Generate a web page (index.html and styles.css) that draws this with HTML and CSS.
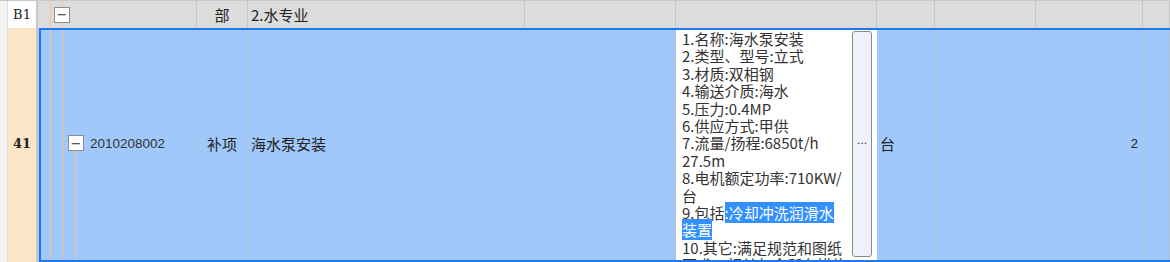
FILE: index.html
```
<!DOCTYPE html>
<html lang="zh-CN">
<head>
    <meta charset="UTF-8">
    <title>清单编辑</title>
    <link rel="stylesheet" href="styles.css">
</head>
<body>

<div class="sheet">
    <!-- 分部行 -->
    <div class="row row-part">
        <div class="gutter"></div>
        <div class="rowhead rowhead-part">B1</div>
        <div class="cell tree">
            <span class="tline t1"></span>
            <span class="tline t2"></span>
            <span class="hook"></span>
            <span class="fold fold-part">−</span>
        </div>
        <div class="cell center">部</div>
        <div class="cell">2.水专业</div>
        <div class="cell"></div>
        <div class="cell"></div>
        <div class="cell"></div>
        <div class="cell"></div>
        <div class="cell"></div>
        <div class="cell"></div>
    </div>

    <!-- 清单行（选中） -->
    <div class="row row-item">
        <div class="gutter"></div>
        <div class="rowhead rowhead-item">41</div>
        <div class="cell tree">
            <span class="tline t1"></span>
            <span class="tline t2"></span>
            <span class="tline t3"></span>
            <span class="fold fold-item">−</span>
            <span class="code">2010208002</span>
        </div>
        <div class="cell center">补项</div>
        <div class="cell wide">海水泵安装</div>
        <div class="cell editor">
            <div class="editor-text">
                1.名称:海水泵安装<br>
                2.类型、型号:立式<br>
                3.材质:双相钢<br>
                4.输送介质:海水<br>
                5.压力:0.4MP<br>
                6.供应方式:甲供<br>
                7.流量/扬程:6850t/h<br>
                27.5m<br>
                8.电机额定功率:710KW/<br>
                台<br>
                9.包括<span class="sel">:冷却冲洗润滑水</span><br>
                <span class="sel">装置</span><br>
                10.其它:满足规范和图纸<br>
                要求，相关包含所有措施
            </div>
            <div class="more-btn">...</div>
        </div>
        <div class="cell">台</div>
        <div class="cell"></div>
        <div class="cell right">2</div>
        <div class="cell"></div>
    </div>
</div>

</body>
</html>
```

FILE: styles.css
```
body {
    margin: 0;
    padding: 0;
    overflow: hidden;
    background-color: #f4f4f4;
    font-family: "Noto Sans CJK SC", "DejaVu Sans", sans-serif;
    font-size: 15px;
    color: #222;
}
.sheet {
    width: 1170px;
    height: 262px;
    overflow: hidden;
    border-top: 1px solid #c8c8c8;
    box-sizing: border-box;
}
.row {
    display: grid;
    grid-template-columns: 8px 30px 159px 51px 277px 151px 201px 58px 101px 107px 27px;
}
.row-part {
    height: 27px;
    background-color: #dcdcdc;
}
.row-item {
    height: 240px;
    background-color: #a0c8fa;
    position: relative;
}
.row-item::after {
    content: "";
    position: absolute;
    left: 39px;
    top: 0;
    right: -4px;
    bottom: 6px;
    border: 2px solid #1e78f0;
    pointer-events: none;
}
.gutter {
    background-color: #f4f4f4;
    border-right: 1px solid #dedede;
}
.rowhead {
    display: flex;
    align-items: center;
    justify-content: center;
    font-family: "DejaVu Serif", "Liberation Serif", serif;
    font-size: 13px;
    border-right: 2px solid #c8c8c8;
}
.rowhead-part {
    background-color: #ffffff;
}
.rowhead-item {
    background-color: #fde6c8;
    font-weight: bold;
    padding-bottom: 10px;
}
.cell {
    display: flex;
    align-items: center;
    padding-left: 3px;
    border-right: 1px solid #c6c6c6;
    white-space: nowrap;
    overflow: hidden;
    position: relative;
}
.row-item .cell {
    border-right-color: #b7c0cc;
    padding-bottom: 10px;
}
.row-item .cell.wide {
    grid-column: span 2;
}
.center {
    justify-content: center;
    padding-left: 0;
}
.right {
    justify-content: flex-end;
    padding-right: 4px;
    font-family: "Liberation Sans", Arial, sans-serif;
    font-size: 13px;
}
.tree {
    border-right-color: #c6c6c6;
}
.tline {
    position: absolute;
    top: 0;
    bottom: 0;
    width: 1px;
    background-color: #f2c694;
}
.t1 { left: 12px; }
.t2 { left: 24px; }
.t3 { left: 37px; top: 123px; }
.hook {
    position: absolute;
    left: 12px;
    top: 13px;
    width: 4px;
    height: 1px;
    background-color: #f2c694;
}
.fold {
    position: relative;
    display: inline-flex;
    align-items: center;
    justify-content: center;
    width: 16px;
    height: 16px;
    box-sizing: border-box;
    border: 1px solid #8c8c8c;
    background-color: #ffffff;
    font-family: "DejaVu Sans", sans-serif;
    font-size: 13px;
    line-height: 1;
    color: #333;
}
.fold-part {
    margin-left: 13px;
}
.fold-item {
    margin-left: 27px;
    margin-right: 6px;
}
.code {
    font-family: "Liberation Sans", Arial, sans-serif;
    font-size: 13.5px;
    color: #333;
}
.editor {
    background-color: #ffffff;
    align-items: flex-start;
    padding: 0 0 0 6px;
    border-right: none;
}
.row-item .cell.editor {
    padding-bottom: 0;
    margin-top: 2px;
}
.editor-text {
    width: 166px;
    flex-shrink: 0;
    font-size: 15px;
    line-height: 17.4px;
    color: #333;
    overflow: hidden;
}
.sel {
    background-color: #3390ff;
    color: #ffffff;
}
.more-btn {
    margin: 1px 0 0 4px;
    width: 20px;
    height: 226px;
    box-sizing: border-box;
    flex-shrink: 0;
    display: flex;
    align-items: center;
    justify-content: center;
    border: 1px solid #8a8a8a;
    border-radius: 3px;
    background-color: #eef2fa;
    font-family: "DejaVu Sans", sans-serif;
    font-size: 11px;
    color: #333;
    padding-bottom: 8px;
}
```
